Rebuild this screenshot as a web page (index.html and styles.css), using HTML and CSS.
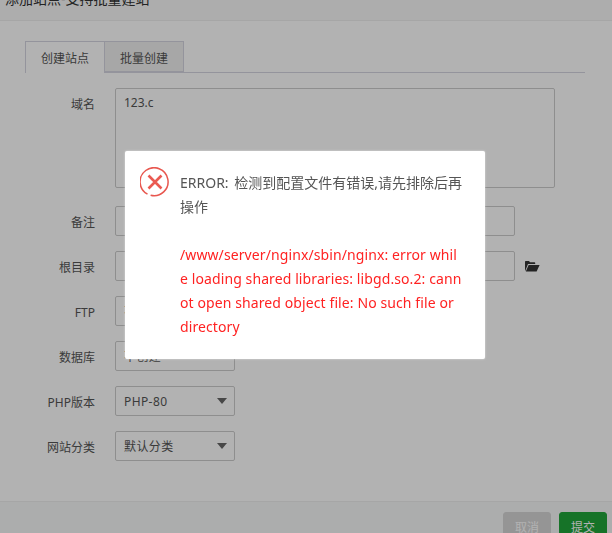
FILE: index.html

```html
<!DOCTYPE html>
<html lang="zh-CN">
<head>
  <meta charset="UTF-8" />
  <title>添加站点</title>
  <link rel="stylesheet" href="styles.css">
</head>
<body>

<div class="layer">
  <div class="layer-title"><span>添加站点-支持批量建站</span></div>

  <div class="layer-body">
    <div class="tabs">
      <div class="tab active">创建站点</div>
      <div class="tab">批量创建</div>
    </div>

    <div class="row row-area">
      <label class="row-label">域名</label>
      <div class="field field-area">123.c</div>
    </div>
    <div class="row">
      <label class="row-label">备注</label>
      <div class="field field-wide"></div>
    </div>
    <div class="row">
      <label class="row-label">根目录</label>
      <div class="field field-wide"></div>
      <svg class="folder" viewBox="0 0 16 12" width="16" height="12">
        <path d="M1 11V1.6L1.6 1H5l1 1.2h4.6l.6.6V4H4L1.4 10.4z" />
        <path d="M4.6 5H15.6L12.6 11.6H1.8z" />
      </svg>
    </div>
    <div class="row">
      <label class="row-label">FTP</label>
      <div class="field field-select">不创建<i class="caret"></i></div>
    </div>
    <div class="row">
      <label class="row-label">数据库</label>
      <div class="field field-select">不创建<i class="caret"></i></div>
    </div>
    <div class="row">
      <label class="row-label">PHP版本</label>
      <div class="field field-select">PHP-80<i class="caret"></i></div>
    </div>
    <div class="row">
      <label class="row-label">网站分类</label>
      <div class="field field-select">默认分类<i class="caret"></i></div>
    </div>
  </div>

  <div class="layer-foot">
    <button class="btn btn-cancel">取消</button>
    <button class="btn btn-submit">提交</button>
  </div>
</div>

<div class="shade"></div>

<div class="dialog">
  <svg class="dialog-icon" viewBox="0 0 30 30" width="30" height="30">
    <path class="ring" d="M7.5 27.1A14 14 0 1 1 10.6 28.3" />
    <path class="cross" d="M8.5 8.5L21.5 21.5M21.5 8.5L8.5 21.5" />
  </svg>
  <div class="dialog-text">
    <p class="dialog-title">ERROR: 检测到配置文件有错误,请先排除后再操作</p>
    <p class="dialog-error">/www/server/nginx/sbin/nginx: error while loading shared libraries: libgd.so.2: cannot open shared object file: No such file or directory</p>
  </div>
</div>

</body>
</html>
```

FILE: styles.css

```css
html, body { margin: 0; height: 100%; overflow: hidden; }
body { font-family: "Noto Sans", "Noto Sans CJK SC", sans-serif; font-size: 12px; color: #555; background: #fff; }
p { margin: 0; }

.layer { height: 533px; display: flex; flex-direction: column; }
.layer-title { height: 20px; line-height: 0; padding-left: 5px; font-size: 14px; color: #333; background: #f8f8f8; border-bottom: 1px solid #eee; overflow: hidden; }
.layer-title span { display: block; margin-top: -1px; line-height: 0; }
.layer-body { flex: 1; padding: 20px 27px 0 25px; }
.layer-foot { box-sizing: border-box; height: 32px; padding: 10px 5px 0 0; display: flex; justify-content: flex-end; gap: 8px; background: #f6f8f8; border-top: 1px solid #eee; overflow: hidden; }

.tabs { display: flex; height: 31px; border-bottom: 1px solid #d5d5e0; margin-bottom: 15px; }
.tab { width: 78px; line-height: 33px; text-align: center; background: #f0f0f0; border: 1px solid #d5d5e0; border-left: 0; color: #555; }
.tab.active { width: 78px; background: #fff; border-left: 1px solid #d5d5e0; border-bottom: 0; height: 31px; }

.row { display: flex; align-items: center; margin-bottom: 15px; height: 30px; }
.row-area { height: 100px; align-items: flex-start; margin-bottom: 18px; }
.row-label { width: 70px; padding-top: 2px; text-align: right; margin-right: 20px; color: #555; }
.row-area .row-label { line-height: 30px; }

.field { box-sizing: border-box; height: 30px; line-height: 28px; padding: 0 8px; border: 1px solid #ccc; border-radius: 2px; color: #555; position: relative; }
.field-area { width: 440px; height: 100px; }
.field-wide { width: 400px; }
.field-select { width: 120px; line-height: 30px; letter-spacing: .4px; }

.caret { position: absolute; right: 7px; top: 11px; border-style: solid; border-width: 6px 5.5px 0; border-color: #666 transparent transparent; }
.folder { margin-left: 9px; fill: #333; }

.btn { width: 48px; height: 30px; padding: 0; border-radius: 3px; font: inherit; color: #fff; }
.btn-cancel { background: #d6d6d6; border: 1px solid #d6d6d6; }
.btn-submit { background: #20a53a; border: 1px solid #20a53a; }

.shade { position: fixed; inset: 0; background: rgba(0, 0, 0, .3); }

.dialog { position: fixed; left: 125px; top: 151px; box-sizing: border-box; width: 360px; height: 208px; background: #fff; border-radius: 2px; box-shadow: 0 0 2px rgba(255, 255, 255, .6); display: flex; padding: 16px 0 0 15px; }
.dialog-icon { flex: none; margin-right: 10px; }
.ring { fill: none; stroke: #e8574f; stroke-width: 1.5; }
.cross { fill: none; stroke: #ea5a52; stroke-width: 2.6; }
.dialog-text { width: 283px; margin-top: 4px; font-size: 14px; line-height: 24px; color: #555; word-break: break-all; }
.dialog-title { word-spacing: 2px; }
.dialog-error { margin-top: 24px; color: #ff2222; letter-spacing: .1px; }
```
